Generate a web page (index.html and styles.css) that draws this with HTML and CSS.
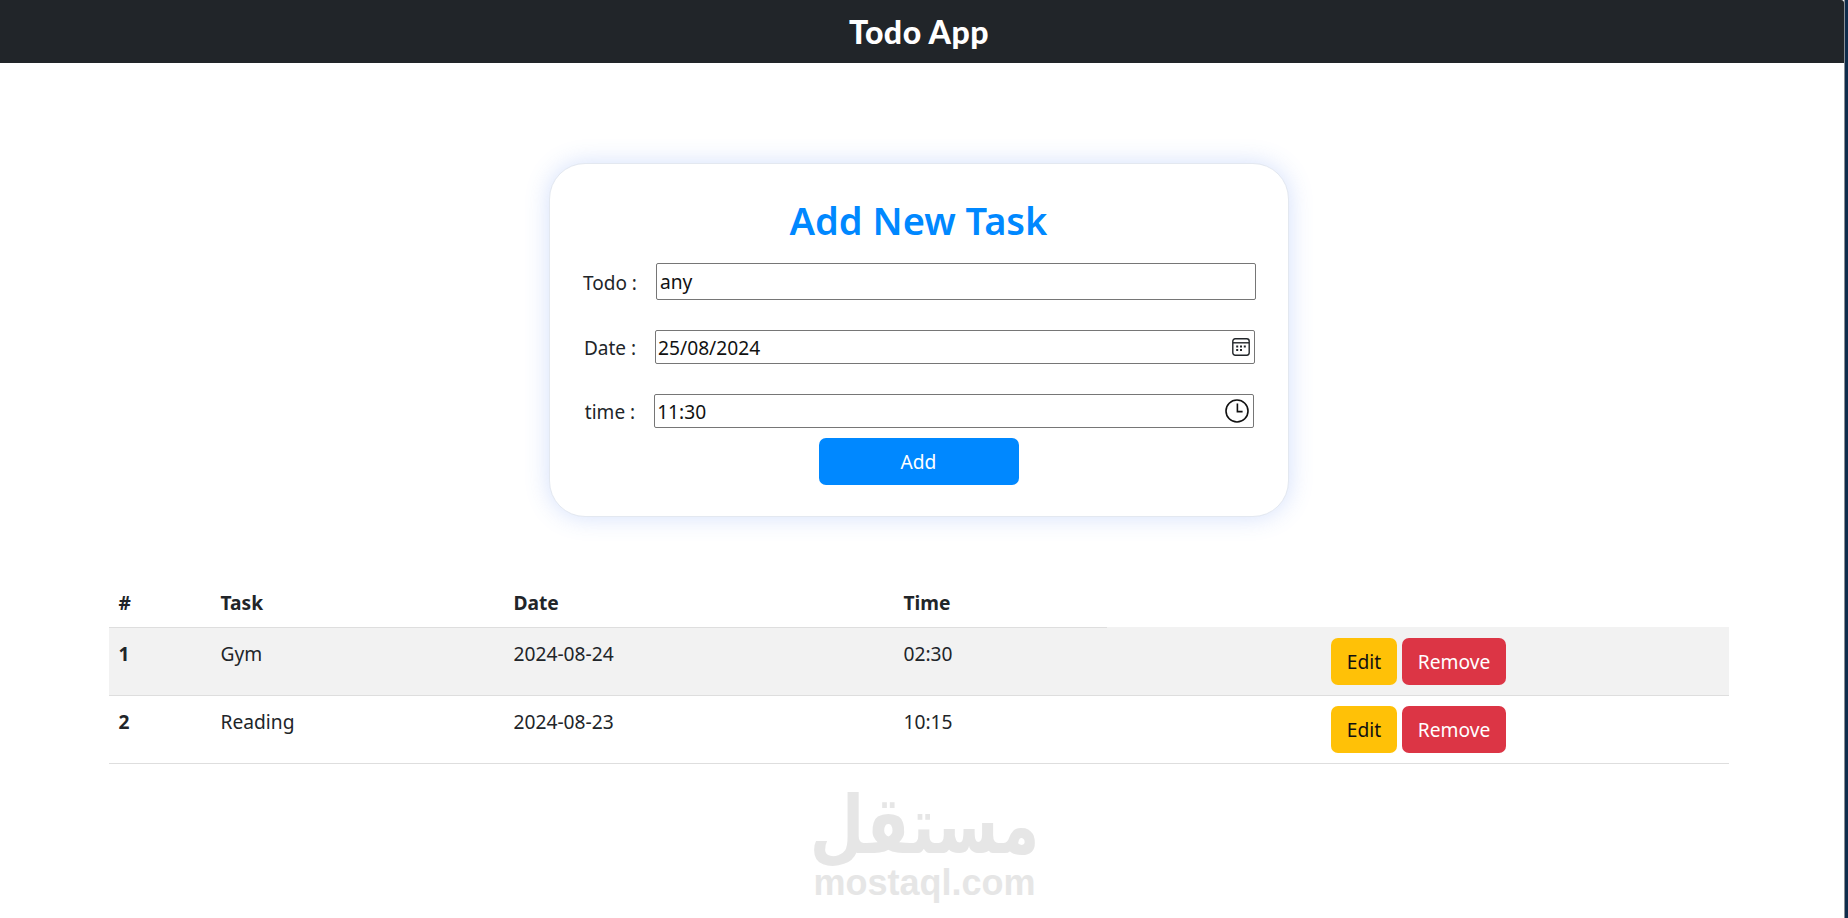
FILE: index.html
```html
<!doctype html>
<html>

<head>
    <title>Todo App</title>
    <link rel="stylesheet" href="styles.css">
</head>

<body>
    <div class="page">
        <div class="navbar"><span class="brand">Todo App</span></div>

        <form class="card" onsubmit="return false;">
            <h2 class="card_title">Add New Task</h2>
            <div class="row row_todo">
                <label>Todo :</label>
                <input class="field todo_input" type="text" value="any">
            </div>
            <div class="row row_date">
                <label>Date :</label>
                <div class="field picker">
                    <input type="text" value="25/08/2024">
                    <svg class="icon_date" width="18" height="18" viewBox="0 0 18 18" fill="none" stroke="#212529" stroke-width="1.4">
                        <rect x="0.8" y="0.8" width="16.4" height="16.4" rx="2.4"/>
                        <path d="M1 4.8h16"/>
                        <path stroke="none" fill="#212529" d="M4.2 7.4h2v2h-2zM8 7.4h2v2h-2zM11.8 7.4h2v2h-2zM4.2 11h2v2h-2zM8 11h2v2h-2z"/>
                    </svg>
                </div>
            </div>
            <div class="row row_time">
                <label>time :</label>
                <div class="field picker">
                    <input type="text" value="11:30">
                    <svg class="icon_time" width="24" height="24" viewBox="0 0 24 24" fill="none" stroke="#111" stroke-width="1.6">
                        <circle cx="12" cy="12" r="11"/>
                        <path d="M12.4 4.6v8h5.2"/>
                    </svg>
                </div>
            </div>
            <button class="add_btn" type="submit">Add</button>
        </form>

        <table class="tasks">
            <colgroup>
                <col class="col_num">
                <col class="col_task">
                <col class="col_date">
                <col class="col_time">
                <col>
            </colgroup>
            <thead>
                <tr>
                    <th>#</th>
                    <th>Task</th>
                    <th>Date</th>
                    <th>Time</th>
                </tr>
            </thead>
            <tbody>
                <tr class="striped">
                    <td class="num">1</td>
                    <td>Gym</td>
                    <td>2024-08-24</td>
                    <td>02:30</td>
                    <td class="actions">
                        <button class="btn edit">Edit</button>
                        <button class="btn remove">Remove</button>
                    </td>
                </tr>
                <tr>
                    <td class="num">2</td>
                    <td>Reading</td>
                    <td>2024-08-23</td>
                    <td>10:15</td>
                    <td class="actions">
                        <button class="btn edit">Edit</button>
                        <button class="btn remove">Remove</button>
                    </td>
                </tr>
            </tbody>
        </table>

        <div class="watermark">
            <div class="wm_ar" dir="rtl" lang="ar">مستقل</div>
            <div class="wm_en">mostaql.com</div>
        </div>
    </div>
</body>

</html>
```
FILE: styles.css
```css
* {
    box-sizing: border-box;
}

body {
    margin: 0;
    height: 918px;
    overflow: hidden;
    background-color: #0f2c4b;
    color: #212529;
    font-family: "Noto Sans", sans-serif;
    font-size: 19.2px;
    line-height: 1.5;
}

.page {
    width: 1845px;
    height: 918px;
    padding-right: 7px;
    background-color: #fff;
    border-right: 1px solid #8a8f96;
    overflow: hidden;
}

.navbar {
    height: 63px;
    margin-right: -7px;
    padding-right: 6px;
    background-color: #212529;
    border-top-right-radius: 3px;
    text-align: center;
}

.brand {
    color: #fff;
    font-family: "Lato", sans-serif;
    font-size: 32px;
    font-weight: 900;
    letter-spacing: 0.5px;
    line-height: 63px;
}

.card {
    width: 740px;
    height: 354px;
    margin: 100px auto 69px;
    padding-top: 32px;
    background-color: #fff;
    border: 1px solid #e3e8f0;
    border-radius: 36px;
    box-shadow: 0 0 24px rgba(70, 120, 240, 0.24);
    text-align: center;
}

.card_title {
    margin: 0 0 19px;
    color: #0088ff;
    font-size: 38px;
    font-weight: 600;
    line-height: 48px;
}

.row {
    display: flex;
    justify-content: center;
    align-items: center;
    gap: 19px;
    padding-left: 2px;
}

.row label {
    padding-top: 3px;
    font-size: 19px;
}

.row_todo {
    margin-bottom: 30px;
}

.row_date {
    margin-bottom: 30px;
}

.row_time {
    margin-bottom: 10px;
}

.field {
    width: 600px;
    background-color: #fff;
    border: 1px solid #767676;
    border-radius: 2px;
    color: #111;
    font-family: inherit;
    font-size: 19.2px;
}

.todo_input {
    height: 37px;
    padding: 0 3px;
    outline: none;
}

.picker {
    display: flex;
    align-items: center;
    height: 34px;
    padding: 0 4px 0 2px;
}

.picker input {
    flex: 1;
    min-width: 0;
    padding: 0;
    border: none;
    outline: none;
    color: #111;
    font-family: inherit;
    font-size: 19.2px;
}

.add_btn {
    width: 200px;
    height: 47px;
    background-color: #0088ff;
    border: none;
    border-radius: 7px;
    color: #fff;
    font-family: inherit;
    font-size: 19.2px;
}

.tasks {
    width: 1620px;
    margin: 0 auto;
    border-collapse: collapse;
    table-layout: fixed;
}

.col_num {
    width: 102px;
}

.col_task {
    width: 293px;
}

.col_date {
    width: 390px;
}

.col_time {
    width: 213px;
}

.tasks th {
    height: 41px;
    padding: 0 10px 6px;
    border-bottom: 1px solid #dedede;
    font-weight: 700;
    text-align: left;
}

.tasks td {
    height: 68px;
    padding: 12px 10px 0;
    border-bottom: 1px solid #dedede;
    vertical-align: top;
}

.tasks .num {
    font-weight: 700;
}

.striped {
    background-color: #f2f2f2;
}

.tasks .actions {
    padding: 10px 10px 0 12px;
    text-align: center;
}

.tasks .striped .actions {
    padding-top: 11px;
}

.btn {
    height: 47px;
    padding: 0 16px;
    border: 1px solid transparent;
    border-radius: 7px;
    font-family: inherit;
    font-size: 19.2px;
}

.edit {
    width: 66px;
    padding: 0;
    background-color: #ffc107;
    color: #111;
}

.remove {
    width: 104px;
    padding: 0;
    background-color: #dc3545;
    color: #fff;
}

.watermark {
    margin-top: 26px;
    padding-left: 12px;
    color: #e6e6e6;
    text-align: center;
}

.wm_ar {
    height: 76px;
    font-family: "DejaVu Sans", sans-serif;
    font-size: 80px;
    font-weight: 700;
    line-height: 72px;
    transform: scaleX(0.785);
}

.wm_en {
    font-family: "Liberation Sans", sans-serif;
    font-size: 36px;
    font-weight: 700;
    line-height: 34px;
}
```
